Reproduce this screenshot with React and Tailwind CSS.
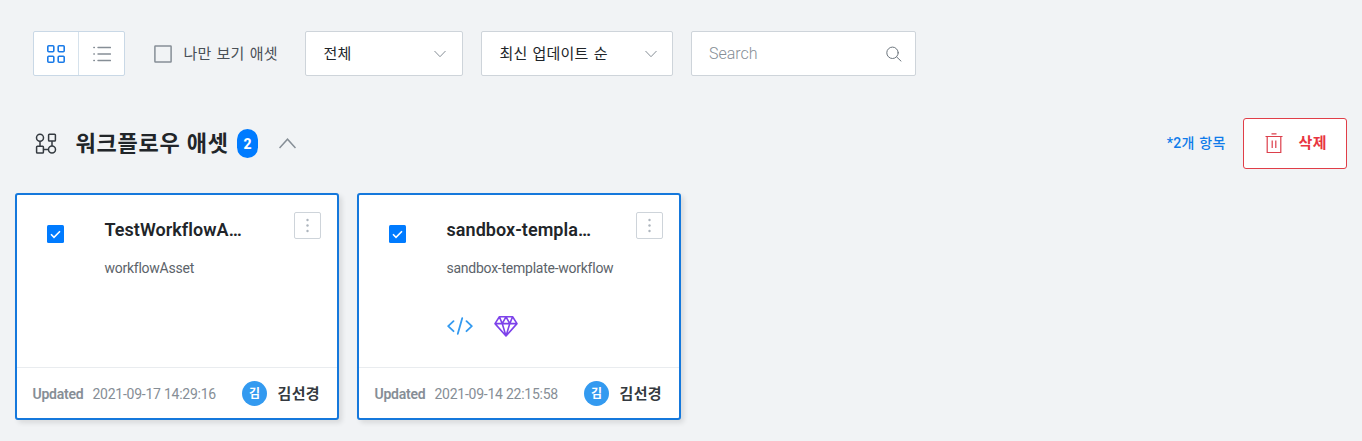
import React from "react";

const cards = [
  { title: "TestWorkflowA…", desc: "workflowAsset", date: "2021-09-17 14:29:16", icons: false },
  { title: "sandbox-templa…", desc: "sandbox-template-workflow", date: "2021-09-14 22:15:58", icons: true },
];

function GridIcon() {
  return (
    <svg width="18" height="18" viewBox="0 0 18 18" fill="none" stroke="#1a7be8" strokeWidth="1.6">
      <rect x="0.8" y="0.8" width="6" height="6" rx="1" />
      <rect x="11.2" y="0.8" width="6" height="6" rx="1" />
      <rect x="0.8" y="11.2" width="6" height="6" rx="1" />
      <rect x="11.2" y="11.2" width="6" height="6" rx="1" />
    </svg>
  );
}

function ListIcon() {
  return (
    <svg width="18" height="16" viewBox="0 0 18 16" fill="none" stroke="#868e96" strokeWidth="1.4" strokeLinecap="round">
      <path d="M5 1.5h12.4M5 8h12.4M5 14.5h12.4M0.8 1.5h.6M0.8 8h.6M0.8 14.5h.6" />
    </svg>
  );
}

function Chevron() {
  return (
    <svg width="12" height="8" viewBox="0 0 12 8" fill="none" stroke="#868e96" strokeWidth="1">
      <path d="M0.5 1 6 6.7 11.5 1" />
    </svg>
  );
}

function SearchIcon() {
  return (
    <svg width="16" height="16" viewBox="0 0 16 16" fill="none" stroke="#6c757d" strokeWidth="1" strokeLinecap="round">
      <circle cx="6.5" cy="6.8" r="5.7" />
      <path d="m10.6 10.9 4.4 4.2" />
    </svg>
  );
}

function WorkflowIcon() {
  return (
    <svg width="22" height="22" viewBox="0 0 22 22" fill="none" stroke="#343a40" strokeWidth="1.5">
      <circle cx="5" cy="4.7" r="3.5" />
      <rect x="13.6" y="1.2" width="6.8" height="6.8" rx="0.8" />
      <rect x="1.6" y="13.2" width="6.8" height="6.8" rx="0.8" />
      <circle cx="17" cy="16.6" r="3.5" />
      <path d="M5 8.2v5M17 8v5.1M8.4 16.6h5.1" />
    </svg>
  );
}

function TrashIcon() {
  return (
    <svg width="18" height="22" viewBox="0 0 18 22" fill="none" stroke="#dc3f4b" strokeWidth="1.2">
      <path d="M6.5 0.9h5M0.5 3.5h17M2.2 3.5v16h13.6v-16M7.2 7.5v7.5M10.8 7.5v7.5" />
    </svg>
  );
}

function CodeIcon() {
  return (
    <svg width="26" height="18" viewBox="0 0 26 18" fill="none" stroke="#339af0" strokeWidth="1.8" strokeLinecap="round" strokeLinejoin="round">
      <path d="M6.5 4.2 1.2 9.2l5.3 5M19.5 4.2l5.3 5-5.3 5M15.2 1.2l-4.4 15.6" />
    </svg>
  );
}

function GemIcon() {
  return (
    <svg width="24" height="22" viewBox="0 0 24 22" fill="none" stroke="#7d42ea" strokeWidth="1.6" strokeLinejoin="round">
      <path d="M5.4 1.8h13.2L23 8.6 12 21 1 8.6zM1 8.6h22M5.4 1.8l2.8 6.8L12 21l3.8-12.4 2.8-6.8M8.2 8.6 12 1.8l3.8 6.8" />
    </svg>
  );
}

function Select({ label, className }) {
  return (
    <div className={"flex h-[45px] items-center justify-between rounded-[2px] border border-[#ced4da] bg-white pl-[17.5px] " + className}>
      <span className="text-[15px] leading-[22px] tracking-[0.2px] [word-spacing:1.2px] text-[#212529]">{label}</span>
      <Chevron />
    </div>
  );
}

function Card({ card }) {
  return (
    <article className="flex h-[227px] w-[324px] flex-col rounded-[3px] border-2 border-[#1578dc] bg-white shadow-[3px_3px_5px_rgba(0,0,0,0.1)]">
      <div className="flex h-[172px] pl-[29.5px] pr-4">
        <div className="mt-[30px] flex h-[18px] w-[17.5px] items-center justify-center rounded-[1.5px] bg-[#007bff]">
          <svg width="11" height="9" viewBox="0 0 11 9" fill="none" stroke="#fff" strokeWidth="1.6">
            <path d="m1 4.3 3 3L10 1.3" />
          </svg>
        </div>
        <div className="ml-[40.5px] flex w-[180px] flex-col">
          <h3 className="mt-[22px] text-[18px] font-semibold leading-[26px] tracking-[0.05px] text-[#212529] [font-variant-ligatures:common-ligatures]">{card.title}</h3>
          <p className="mt-[15px] text-[14px] leading-5 tracking-[-0.25px] text-[#5c636a] [font-variant-ligatures:common-ligatures]">{card.desc}</p>
          {card.icons && (
            <div className="mt-[37px] flex items-center gap-[21px]">
              <CodeIcon />
              <GemIcon />
            </div>
          )}
        </div>
        <button className="ml-auto mt-[17px] flex h-[27px] w-[27px] shrink-0 items-center justify-center rounded-[2px] border border-[#ced4da]">
          <svg width="3" height="15" viewBox="0 0 3 15" fill="#adb5bd">
            <circle cx="1.5" cy="2" r="1.2" />
            <circle cx="1.5" cy="7.5" r="1.2" />
            <circle cx="1.5" cy="13" r="1.2" />
          </svg>
        </button>
      </div>
      <footer className="flex flex-1 items-center border-t border-[#e9ecef] pl-[15.5px] pr-4 pt-px text-[14px] leading-5 text-[#868e96]">
        <span className="w-[51px] font-semibold tracking-[-0.25px]">Updated</span>
        <span className="ml-[9px] tracking-[-0.25px]">{card.date}</span>
        <span className="ml-auto flex size-[25px] items-center justify-center rounded-full bg-[#339af0] text-[12px] font-bold text-white">김</span>
        <span className="ml-[10.5px] w-[43.5px] text-[15px] font-bold tracking-[0.35px] text-[#343a40]">김선경</span>
      </footer>
    </article>
  );
}

export default function App() {
  return (
    <main className="h-[441px] w-[1362px] overflow-hidden whitespace-nowrap bg-[#f1f3f5] pt-[31px] font-[Roboto,'Noto_Sans_CJK_KR',sans-serif]">
      <div className="flex items-center pl-[33px]">
        <div className="flex h-[45px] w-[92px] rounded-[2px] border border-[#c9d8e6] bg-white">
          <button className="flex w-[45px] items-center justify-center border-r border-[#d6e2ec]"><GridIcon /></button>
          <button className="flex flex-1 items-center justify-center"><ListIcon /></button>
        </div>
        <label className="ml-[29px] flex w-[151px] items-center">
          <svg width="18" height="18" viewBox="0 0 18 18" fill="none" stroke="#868e96" strokeWidth="1.5">
            <rect x="0.9" y="0.9" width="16.2" height="16.2" rx="0.5" />
          </svg>
          <span className="ml-[11.5px] text-[15px] leading-[22px] tracking-[0.2px] [word-spacing:1.2px] text-[#495057]">나만 보기 애셋</span>
        </label>
        <Select label="전체" className="w-[158px] pr-4" />
        <Select label="최신 업데이트 순" className="ml-[18px] w-[192px] pr-[15px]" />
        <div className="ml-[18px] flex h-[45px] w-[225px] items-center justify-between rounded-[2px] border border-[#ced4da] bg-white pl-[17px] pr-[13px]">
          <span className="text-[16px] font-light text-[#868e96]">Search</span>
          <SearchIcon />
        </div>
      </div>
      <header className="mt-[42px] flex h-[51px] items-center pl-[35px] pr-[15px]">
        <WorkflowIcon />
        <h2 className="ml-[18.5px] w-[152.5px] text-[22px] font-bold leading-8 tracking-[0.75px] text-[#212529]">워크플로우 애셋</h2>
        <span className="ml-[9px] flex h-[29px] w-[21px] items-center justify-center rounded-[10.5px] bg-[#007bff] pt-px text-[14px] font-extrabold text-white">2</span>
        <svg className="ml-[21px]" width="17" height="11" viewBox="0 0 17 11" fill="none" stroke="#868e96" strokeWidth="1.5">
          <path d="M0.5 10 8.5 1.2 16.5 10" />
        </svg>
        <span className="ml-auto text-[14px] font-medium tracking-[0.2px] [word-spacing:1.2px] text-[#0f7bea]">*2개 항목</span>
        <button className="ml-[17.5px] flex h-[51px] w-[104px] items-center rounded-[3px] border border-[#e03e48] bg-white pl-[21px]">
          <TrashIcon />
          <span className="ml-[15.5px] text-[15px] font-bold tracking-[0.4px] text-[#e8353f]">삭제</span>
        </button>
      </header>
      <section className="mt-6 flex gap-[18px] pl-[15px]">
        {cards.map((card) => <Card key={card.title} card={card} />)}
      </section>
    </main>
  );
}
